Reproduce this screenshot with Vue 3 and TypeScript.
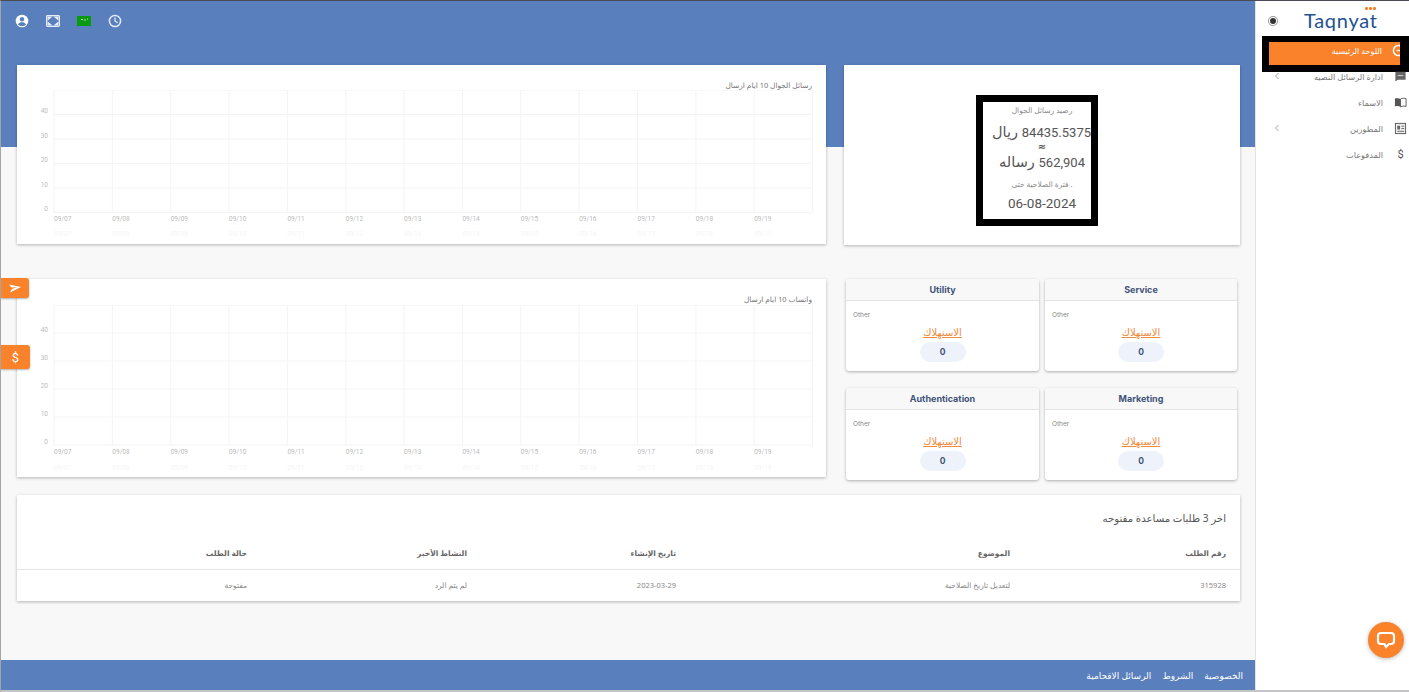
<script setup lang="ts">
const dates = ['09/07','09/08','09/09','09/10','09/11','09/12','09/13','09/14','09/15','09/16','09/17','09/18','09/19']
const ticks = [40,30,20,10,0]
const verticals = Array.from({ length: 14 }, (_, i) => 37 + i * 58.35)

interface Chart { title: string; height: number; step: number; label: number; ghost: number; svgH: number; offset: number; tickY: number }
const chart1: Chart = { title: 'رسائل الجوال 10 ايام ارسال', height: 122.5, step: 24.5, label: 131, ghost: 146, svgH: 154, offset: 25, tickY: 23 }
const chart2: Chart = { title: 'واتساب 10 ايام ارسال', height: 140, step: 28, label: 149, ghost: 165, svgH: 172, offset: 26, tickY: 27 }
const charts = { chart1, chart2 }
const miniNames = ['Utility', 'Service', 'Authentication', 'Marketing']
const navItems = [
  { label: 'ادارة الرسائل النصيه', icon: 'msg', arrow: true },
  { label: 'الاسماء', icon: 'book', arrow: false },
  { label: 'المطورين', icon: 'dev', arrow: true },
  { label: 'المدفوعات', icon: 'dollar', arrow: false },
]
</script>

<template>
  <div class="page">
    <div class="content">
      <header class="topbar">
        <svg class="ico" viewBox="0 0 14 14"><circle cx="7" cy="7" r="6.3" fill="#fff"/><circle cx="7" cy="5.3" r="2.2" fill="#5a7fbd"/><path d="M3 10.6c.8-1.8 2.3-2.4 4-2.4s3.2.6 4 2.4c-1 1.1-2.4 1.6-4 1.6s-3-.5-4-1.6z" fill="#5a7fbd"/></svg>
        <svg class="ico" viewBox="0 0 14 14"><rect x="0.6" y="1.6" width="12.8" height="10.8" rx="0.8" fill="#5a7fbd" stroke="#e6ecf7" stroke-width="1.2"/><path d="M1.5 2.5h5L1.5 6.800zM12.5 2.500v4.300l-5-4.300zM1.500 11.500V7.200l5 4.300zM12.500 11.500h-5l5-4.300z" fill="#e6ecf7"/></svg>
        <svg class="ico flag" viewBox="0 0 14 11"><rect width="14" height="10" y="0.5" fill="#0a9a12"/><path d="M4 4h2M8 3.500v2M10 3.500h1" stroke="#cfe8c8" stroke-width="0.9"/></svg>
        <svg class="ico" viewBox="0 0 14 14"><circle cx="7" cy="7" r="5.6" fill="none" stroke="#e3eaf7" stroke-width="1.5"/><path d="M7 3.600V7l2.600 1.800" fill="none" stroke="#e3eaf7" stroke-width="1.300"/></svg>
      </header>

      <main class="main">
        <div class="row">
          <section class="card chart-a">
            <div class="chart-title" :style="{ height: charts.chart1.offset + 'px' }">{{ charts.chart1.title }}</div>
            <svg class="plot" width="809" :height="charts.chart1.svgH">
              <line v-for="x in verticals" :key="x" :x1="x" :x2="x" :y1="0" :y2="charts.chart1.height" class="grid"/>
              <line v-for="n in 6" :key="n" x1="37" x2="795.5" :y1="(n - 1) * charts.chart1.step" :y2="(n - 1) * charts.chart1.step" class="grid"/>
              <text v-for="(t, i) in ticks" :key="t" x="31" :y="charts.chart1.tickY + i * charts.chart1.step" class="tick" text-anchor="end">{{ t }}</text>
              <text v-for="(d, i) in dates" :key="d" :x="37 + i * 58.35" :y="charts.chart1.label" class="tick">{{ d }}</text>
              <text v-for="(d, i) in dates" :key="'g' + d" :x="37 + i * 58.35" :y="charts.chart1.ghost" class="ghost">{{ d }}</text>
            </svg>
          </section>
          <section class="card balance-card">
            <div class="balance">
              <div class="small">رصيد رسائل الجوال</div>
              <div class="big first"><span class="num">84435.5375</span> ريال</div>
              <div class="approx">≈</div>
              <div class="big second"><span class="num">562,904</span> رساله</div>
              <div class="small gap">. فترة الصلاحية حتى</div>
              <div class="big date"><span class="num">06-08-2024</span></div>
            </div>
          </section>
        </div>

        <div class="row row-two">
          <section class="card chart-b">
            <div class="chart-title" :style="{ height: charts.chart2.offset + 'px' }">{{ charts.chart2.title }}</div>
            <svg class="plot" width="809" :height="charts.chart2.svgH">
              <line v-for="x in verticals" :key="x" :x1="x" :x2="x" :y1="0" :y2="charts.chart2.height" class="grid"/>
              <line v-for="n in 6" :key="n" x1="37" x2="795.5" :y1="(n - 1) * charts.chart2.step" :y2="(n - 1) * charts.chart2.step" class="grid"/>
              <text v-for="(t, i) in ticks" :key="t" x="31" :y="charts.chart2.tickY + i * charts.chart2.step" class="tick" text-anchor="end">{{ t }}</text>
              <text v-for="(d, i) in dates" :key="d" :x="37 + i * 58.35" :y="charts.chart2.label" class="tick">{{ d }}</text>
              <text v-for="(d, i) in dates" :key="'g' + d" :x="37 + i * 58.35" :y="charts.chart2.ghost" class="ghost">{{ d }}</text>
            </svg>
          </section>
          <div class="minis">
            <article v-for="name in miniNames" :key="name" class="mini">
              <h3>{{ name }}</h3>
              <div class="mini-body">
                <div class="other">Other</div>
                <div class="usage">الاستهلاك</div>
                <div class="pill">0</div>
              </div>
            </article>
          </div>
        </div>

        <section class="card tickets">
          <h2>اخر 3 طلبات مساعدة مفتوحه</h2>
          <table>
            <colgroup><col class="c1"><col class="c2"><col class="c3"><col class="c4"><col></colgroup>
            <thead>
              <tr><th>رقم الطلب</th><th>الموضوع</th><th>تاريخ الإنشاء</th><th>النشاط الأخير</th><th>حالة الطلب</th></tr>
            </thead>
            <tbody>
              <tr><td>315928</td><td>لتعديل تاريخ الصلاحية</td><td>2023-03-29</td><td>لم يتم الرد</td><td>مفتوحة</td></tr>
            </tbody>
          </table>
        </section>
      </main>

      <footer class="footer">
        <a>الخصوصية</a><a>الشروط</a><a>الرسائل الاقحامية</a>
      </footer>
    </div>

    <aside class="sidebar">
      <div class="brand">
        <span class="radio"></span>
        <div class="logo"><i class="dots"><b></b><b></b><b></b></i>Taqnyat</div>
      </div>
      <div class="active-frame">
        <div class="active">
          <span>اللوحة الرئيسية</span>
          <svg class="nav-ico" viewBox="0 0 14 14"><circle cx="7" cy="7" r="5.5" fill="none" stroke="#fff" stroke-width="1.6"/><path d="M5 7h4" stroke="#fff" stroke-width="1.4"/></svg>
        </div>
      </div>
      <nav class="nav">
        <div v-for="item in navItems" :key="item.label" class="nav-item">
          <svg v-if="item.arrow" class="chev" viewBox="0 0 6 8"><path d="M4.500 1 1.500 4l3 3" fill="none" stroke="#999" stroke-width="0.9"/></svg>
          <span class="nav-label">{{ item.label }}</span>
          <svg v-if="item.icon === 'msg'" class="nav-ico" viewBox="0 0 14 14"><path d="M1.500 2h11v8.500H4L1.500 12.500z" fill="#666"/><path d="M4 6h6" stroke="#ddd" stroke-width="1"/></svg>
          <svg v-else-if="item.icon === 'book'" class="nav-ico" viewBox="0 0 14 14"><path d="M7 3.300C5.500 2.300 3 2.300 1 2.800v8.400c2-.5 4.500-.5 6 .5z" fill="#555"/><path d="M7 3.300c1.500-1 4-1 6-.5v8.400c-2-.5-4.500-.5-6 .5z" fill="#fff" stroke="#555" stroke-width="1"/></svg>
          <svg v-else-if="item.icon === 'dev'" class="nav-ico" viewBox="0 0 14 14"><rect x="1.500" y="1.500" width="11" height="11" fill="#eee" stroke="#555" stroke-width="1"/><rect x="3.500" y="4" width="3" height="4" fill="#666"/><path d="M8 4.500h3M8 7h3M3.500 10h7.500" stroke="#666" stroke-width="1"/></svg>
          <span v-else class="nav-dollar">$</span>
        </div>
      </nav>
    </aside>

    <button class="tab tab-send" type="button">
      <svg viewBox="0 0 14 10" width="14" height="11"><path d="M1 1l12 2.500L2 9l2-3.500L9 3.800 3.500 4z" fill="#fff"/></svg>
    </button>
    <button class="tab tab-dollar" type="button">$</button>
    <button class="chat" type="button">
      <svg viewBox="0 0 20 20" width="20" height="20"><path d="M5 3h10a3 3 0 0 1 3 3v5a3 3 0 0 1-3 3h-2l-3 3-1.500-3H5a3 3 0 0 1-3-3V6a3 3 0 0 1 3-3z" fill="none" stroke="#fff" stroke-width="2.200"/></svg>
    </button>
  </div>
</template>

<style>
html, body { margin: 0; padding: 0; background: #fff; overflow: hidden; }
</style>

<style scoped>
.page {
  position: relative;
  box-sizing: border-box;
  width: 1409px;
  height: 692px;
  display: flex;
  border-top: 1px solid #4a4a52;
  border-left: 1px solid #a5a5a8;
  border-bottom: 2px solid #c4c4c8;
  font-family: "Noto Sans", "DejaVu Sans", sans-serif;
  overflow: hidden;
  background: #fff;
}
.content {
  width: 1254px;
  display: flex;
  flex-direction: column;
  background: linear-gradient(#5a7fbd 146px, #f8f8f9 146px);
}
.topbar {
  height: 64px;
  box-sizing: border-box;
  padding: 13px 0 0 14px;
  display: flex;
  align-items: flex-start;
  gap: 17px;
}
.ico { width: 14px; height: 14px; display: block; }
.main { flex: 1; padding: 0 15px 0 16px; display: flex; flex-direction: column; }
.row { display: grid; grid-template-columns: 809px 396px; column-gap: 18px; }
.row-two { margin-top: 34px; height: 201px; }
.card { background: #fff; box-shadow: 0 1px 3px rgba(0,0,0,.28); }
.chart-a { height: 179px; }
.chart-b { height: 198px; }
.chart-title {
  box-sizing: border-box;
  direction: rtl;
  padding: 13px 14px 0 0;
  font-size: 7.4px;
  line-height: 14px;
  color: #777;
}
.plot { display: block; }
.grid { stroke: #f4f4f5; stroke-width: 1; }
.tick { font-size: 6.5px; fill: #bbb; font-family: "Roboto", sans-serif; }
.ghost { font-size: 6.5px; fill: #f5f5f5; font-family: "Roboto", sans-serif; }
.balance-card { height: 180px; display: flex; align-items: center; justify-content: center; }
.balance {
  box-sizing: border-box;
  width: 122px;
  height: 131px;
  margin-right: 10px;
  margin-top: 11px;
  border: 7px solid #000;
  background: #fff;
  direction: rtl;
  text-align: center;
  color: #555;
  padding: 2px 0 0 10px;
}
.small { font-size: 7.5px; line-height: 12px; color: #8a8a8a; }
.big { font-size: 14.5px; line-height: 18px; color: #555; white-space: nowrap; }
.num { font-family: "Roboto", sans-serif; font-size: 13px; }
.first { margin-top: 6px; }
.approx { margin-top: 0; font-size: 10px; line-height: 8px; font-weight: 700; color: #555; }
.second { margin-top: 2px; }
.gap { margin-top: 6px; }
.date { margin-top: 3px; }
.date .num { font-size: 13.5px; }
.minis {
  display: grid;
  grid-template-columns: 193px 192px;
  grid-template-rows: 92px 92px;
  gap: 17px 6px;
  padding-left: 2px;
}
.mini { background: #fff; border-radius: 3px; box-shadow: 0 1px 3px rgba(0,0,0,.3); overflow: hidden; font-family: "Inter", sans-serif; }
.mini h3 {
  margin: 0;
  height: 22px;
  box-sizing: border-box;
  border-bottom: 1px solid #e4e4e6;
  background: #f8f8f8;
  color: #3f5278;
  font-size: 9px;
  line-height: 21px;
  font-weight: 700;
  text-align: center;
}
.mini-body { padding: 10px 7px 0; }
.other { font-size: 6.5px; line-height: 8px; color: #888; }
.usage {
  margin-top: 6px;
  text-align: center;
  direction: rtl;
  font-family: "Noto Sans", "DejaVu Sans", sans-serif;
  font-size: 10px;
  line-height: 14px;
  color: #f08a3c;
  text-decoration: underline;
}
.pill {
  width: 46px;
  height: 20px;
  margin: 3px auto 0;
  border-radius: 10px;
  background: #eef3fb;
  color: #3f5278;
  font-size: 8.5px;
  font-weight: 700;
  line-height: 20px;
  text-align: center;
}
.tickets { height: 106px; margin-top: 15px; direction: rtl; }
.tickets h2 {
  margin: 0;
  height: 42px;
  box-sizing: border-box;
  padding: 15px 14px 0 0;
  font-size: 10.2px;
  line-height: 16px;
  font-weight: 400;
  color: #555;
}
table { width: 100%; border-collapse: collapse; table-layout: fixed; font-size: 7.5px; }
.c1 { width: 216px; }
.c2 { width: 334px; }
.c3 { width: 209px; }
.c4 { width: 220px; }
th, td { text-align: right; padding: 0 14px 0 0; }
th { height: 32px; border-bottom: 1px solid #e4e4e6; color: #666; font-weight: 600; }
td { height: 29px; color: #888; }
.footer {
  height: 30px;
  margin-top: auto;
  background: #5a7fbd;
  direction: rtl;
  display: flex;
  align-items: center;
  gap: 11px;
  padding-right: 12px;
  color: #fff;
  font-size: 9px;
}
.sidebar { flex: 1; border-left: 1px solid #e2e2e4; background: #fff; display: flex; flex-direction: column; }
.brand { height: 35px; display: flex; align-items: center; padding: 3px 0 0 14px; box-sizing: border-box; }
.radio {
  width: 6px; height: 6px; border-radius: 50%; margin-top: 2px;
  background: #333; box-shadow: 0 0 0 1px #fff, 0 0 0 2px #999;
}
.logo {
  position: relative;
  margin-left: 28px;
  font-family: "Lato", sans-serif;
  font-size: 20px;
  font-weight: 400;
  letter-spacing: .7px;
  line-height: 24px;
  color: #25528f;
}
.dots { position: absolute; top: -1px; right: 2px; display: flex; gap: 1.5px; }
.dots b { width: 2.5px; height: 2.5px; border-radius: 50%; background: #f58025; }
.active-frame { margin-left: 6px; height: 36px; background: #000; box-sizing: border-box; padding: 6px 9px 7px 7px; }
.active {
  height: 100%;
  background: #f9822a;
  direction: rtl;
  color: #fff;
  font-size: 8px;
  display: flex;
  align-items: center;
  justify-content: flex-start;
  padding: 0 18px 6px 0;
  box-sizing: border-box;
  position: relative;
  overflow: hidden;
}
.active .nav-ico { position: absolute; right: -5px; top: 2px; }
.nav { display: flex; flex-direction: column; }
.nav-item { height: 26px; display: flex; align-items: center; padding: 0 2px 0 18px; color: #777; font-size: 8.2px; }
.nav-label { margin-left: auto; margin-right: 11px; direction: rtl; }
.nav-item:first-child { margin-top: -9px; }
.nav-ico { width: 13px; height: 13px; display: block; flex: none; }
.nav-dollar { width: 13px; text-align: center; font-size: 11px; color: #555; font-family: "Roboto", sans-serif; }
.chev { width: 6px; height: 8px; }
.tab {
  position: absolute;
  left: 0;
  border: 0;
  padding: 0;
  background: #f9822a;
  color: #fff;
  border-radius: 0 3px 3px 0;
  box-shadow: 0 1px 2px rgba(0,0,0,.3);
  display: flex;
  align-items: center;
  justify-content: center;
}
.tab-send { top: 277px; width: 28px; height: 20px; }
.tab-dollar { top: 344px; width: 29px; height: 24px; font: 13px "Roboto", sans-serif; }
.chat {
  position: absolute;
  left: 1367px;
  top: 621px;
  width: 36px;
  height: 36px;
  border: 0;
  padding: 0;
  border-radius: 50%;
  background: #f9822a;
  box-shadow: 0 1px 4px rgba(0,0,0,.25);
  display: flex;
  align-items: center;
  justify-content: center;
}
</style>
